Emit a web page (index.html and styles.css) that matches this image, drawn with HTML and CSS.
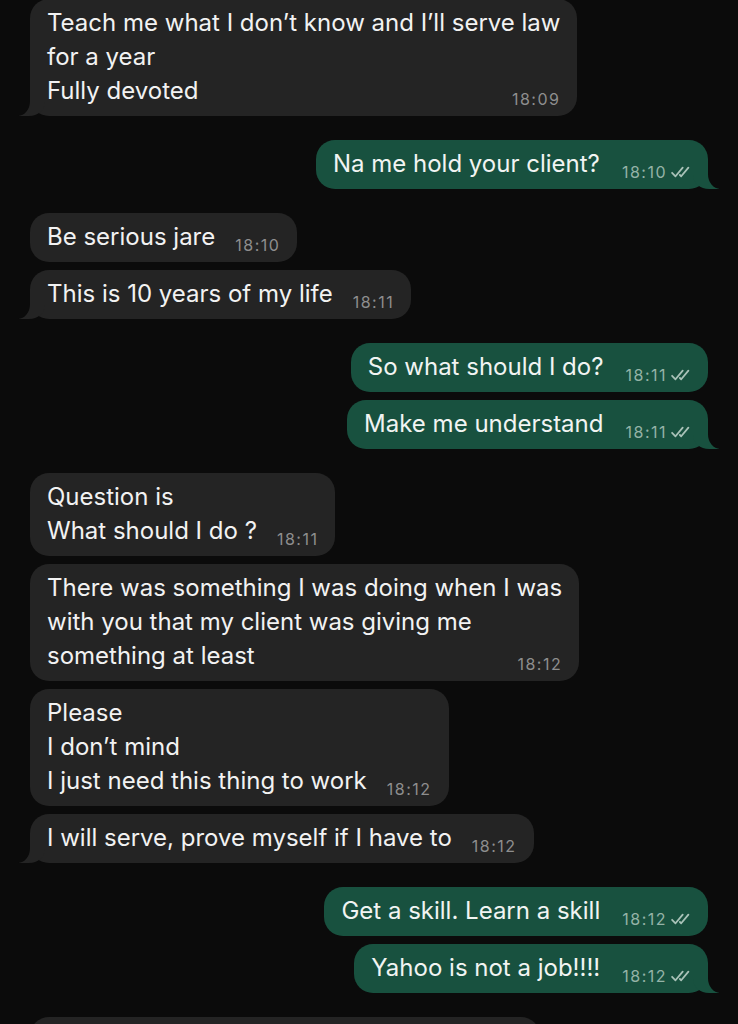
FILE: index.html
```html
<!DOCTYPE html>
<html lang="en">
<head>
  <meta charset="UTF-8">
  <title>Chat</title>
  <link rel="stylesheet" href="styles.css">
</head>
<body>
  <div class="chat">
    <div class="group in top">
      <div class="msg tail">Teach me what I don’t know and I’ll serve law<br>for a year<br>Fully devoted<span class="meta">18:09</span></div>
    </div>

    <div class="group out">
      <div class="msg tail">Na me hold your client?<span class="meta">18:10<svg class="ticks" viewBox="0 0 20 12"><path d="M1.6 6.8 L5 10.3 L12.2 1.6 M9.4 9 L10.7 10.3 L17.9 1.6"/></svg></span></div>
    </div>

    <div class="group in">
      <div class="msg">Be serious jare<span class="meta">18:10</span></div>
      <div class="msg tail">This is 10 years of my life<span class="meta">18:11</span></div>
    </div>

    <div class="group out">
      <div class="msg">So what should I do?<span class="meta">18:11<svg class="ticks" viewBox="0 0 20 12"><path d="M1.6 6.8 L5 10.3 L12.2 1.6 M9.4 9 L10.7 10.3 L17.9 1.6"/></svg></span></div>
      <div class="msg tail">Make me understand<span class="meta">18:11<svg class="ticks" viewBox="0 0 20 12"><path d="M1.6 6.8 L5 10.3 L12.2 1.6 M9.4 9 L10.7 10.3 L17.9 1.6"/></svg></span></div>
    </div>

    <div class="group in">
      <div class="msg">Question is<br>What should I do ?<span class="meta">18:11</span></div>
      <div class="msg">There was something I was doing when I was<br>with you that my client was giving me<br>something at least<span class="meta">18:12</span></div>
      <div class="msg">Please<br>I don’t mind<br>I just need this thing to work<span class="meta">18:12</span></div>
      <div class="msg tail">I will serve, prove myself if I have to<span class="meta">18:12</span></div>
    </div>

    <div class="group out">
      <div class="msg">Get a skill. Learn a skill<span class="meta">18:12<svg class="ticks" viewBox="0 0 20 12"><path d="M1.6 6.8 L5 10.3 L12.2 1.6 M9.4 9 L10.7 10.3 L17.9 1.6"/></svg></span></div>
      <div class="msg tail">Yahoo is not a job!!!!<span class="meta">18:12<svg class="ticks" viewBox="0 0 20 12"><path d="M1.6 6.8 L5 10.3 L12.2 1.6 M9.4 9 L10.7 10.3 L17.9 1.6"/></svg></span></div>
    </div>

    <div class="group in">
      <div class="msg partial"></div>
    </div>
  </div>
</body>
</html>
```

FILE: styles.css
```css
body {
  margin: 0;
  padding: 0;
  height: 1024px;
  overflow: hidden;
  background-color: #0b0b0b;
  font-family: 'Inter', 'Noto Sans', sans-serif;
  color: #f2f2f2;
}

.chat {
  display: flex;
  flex-direction: column;
  gap: 24px;
  padding: 0 30px;
}

.group {
  display: flex;
  flex-direction: column;
  gap: 8px;
}

.group.top {
  margin-top: -1px;
}

.group.in {
  align-items: flex-start;
}

.group.out {
  align-items: flex-end;
}

.msg {
  position: relative;
  max-width: 560px;
  box-sizing: border-box;
  padding: 7px 17px 8px 17px;
  border-radius: 19px;
  font-size: 24px;
  line-height: 34px;
  white-space: nowrap;
  background-color: #242424;
}

.out .msg {
  background-color: #18513f;
  color: #f1f4f2;
}

.meta {
  float: right;
  margin-left: 20px;
  padding-top: 17px;
  font-size: 16px;
  line-height: 17px;
  letter-spacing: 1.5px;
  color: #8e8e8e;
}

.out .meta {
  margin-left: 22px;
  color: #94b3a7;
}

.ticks {
  width: 21px;
  height: 12px;
  margin-left: 3px;
  fill: none;
  stroke: #a9c2b8;
  stroke-width: 1.8;
  stroke-linecap: round;
  stroke-linejoin: round;
}

/* bubble tails */
.msg.tail::before,
.msg.tail::after {
  content: "";
  position: absolute;
  bottom: 0;
  height: 20px;
}

.in .msg.tail::before {
  left: -11px;
  width: 26px;
  background-color: #242424;
  border-bottom-right-radius: 16px 14px;
}

.in .msg.tail::after {
  left: -30px;
  width: 30px;
  background-color: #0b0b0b;
  border-bottom-right-radius: 12px 15px;
}

.out .msg.tail::before {
  right: -11px;
  width: 26px;
  background-color: #18513f;
  border-bottom-left-radius: 16px 14px;
}

.out .msg.tail::after {
  right: -30px;
  width: 30px;
  background-color: #0b0b0b;
  border-bottom-left-radius: 12px 15px;
}

.msg.partial {
  width: 510px;
  height: 60px;
}
```
